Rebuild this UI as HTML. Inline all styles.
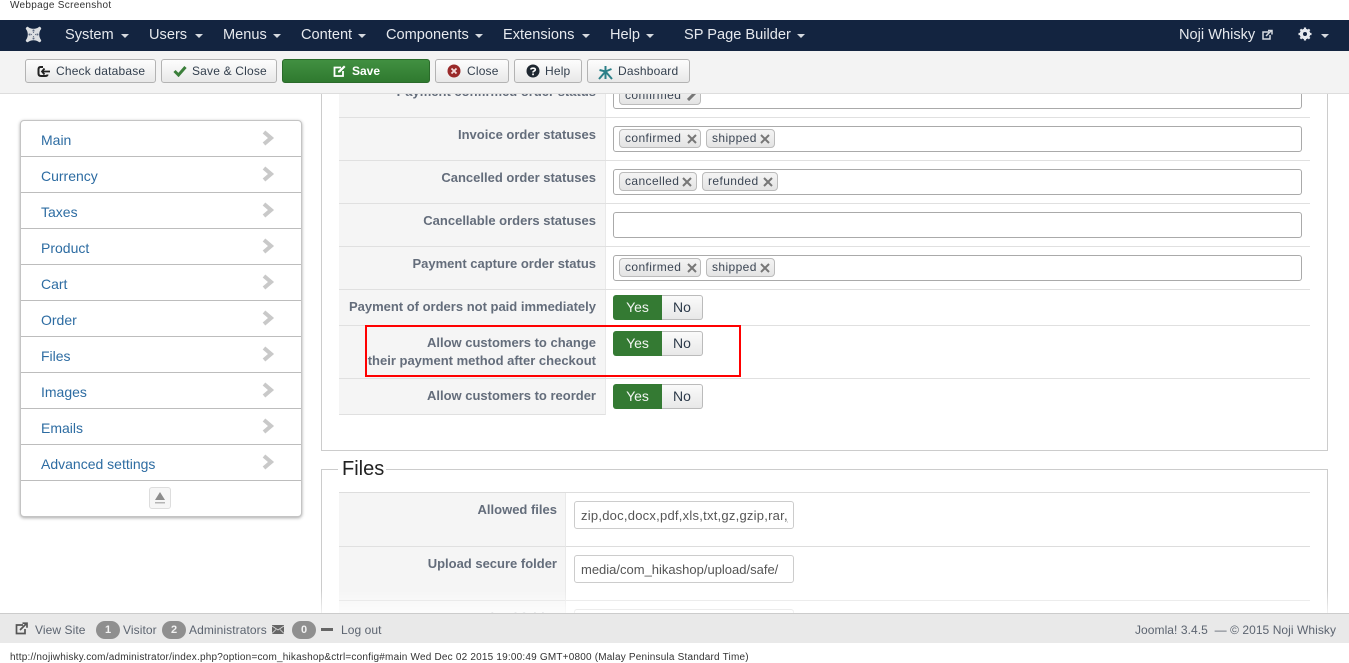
<!DOCTYPE html>
<html><head><meta charset="utf-8"><title>Webpage Screenshot</title>
<style>
*{box-sizing:border-box}
html,body{margin:0;padding:0;background:#fff;width:1349px;height:663px;overflow:hidden;font-family:"Liberation Sans",Arial,sans-serif}
.a{position:absolute}
.t{position:absolute;white-space:nowrap}
.nav{color:#e6e9ee;font-size:14.6px;top:26px;line-height:18px}
.car{position:absolute;top:34px;width:8px;height:4px;border-left:4px solid transparent;border-right:4px solid transparent;border-top:4px solid #d5d9df}
.btn{position:absolute;top:59px;height:24px;border:1px solid #b3b3b3;border-radius:3px;background:linear-gradient(#fdfdfd,#e8e8e8);color:#333f4d;font-size:12px;letter-spacing:.18px;line-height:22px;white-space:nowrap}
.btn span{position:absolute;top:0}
.btn svg{position:absolute}
.side{left:20px;top:120px;width:282px;height:397px;background:#fff;border:1px solid #c4c4c4;border-radius:4px;box-shadow:0 1px 3px rgba(0,0,0,.35)}
.si{position:absolute;left:0;width:280px;height:36px;border-bottom:1px solid #bdbdbd;color:#2d6ca2;font-size:14px;line-height:38px;padding-left:20px}
.si svg{position:absolute;left:241px;top:9px}
.lab{position:absolute;left:339px;width:267px;background:#f5f5f5;border-right:1px solid #e9e9e9;border-bottom:1px solid #e0e0e0}
.rowl{position:absolute;left:605px;width:705px;height:1px;background:#e0e0e0}
.l{position:absolute;right:9px;top:8px;font-size:13px;font-weight:bold;color:#646d7b;white-space:nowrap;text-align:right;line-height:18px}
.box{position:absolute;left:613px;width:689px;height:26px;background:#fff;border:1px solid #aaa;border-radius:3px}
.tag{position:absolute;height:19px;border:1px solid #bbb;border-radius:4px;background:linear-gradient(#f4f4f4,#e4e4e4);font-size:12px;letter-spacing:.4px;color:#3c4654;line-height:16px;padding-left:5px;white-space:nowrap}
.tag b{position:absolute;top:4px;width:10px;height:10px}
.tag svg{display:block}
.yes{position:absolute;left:613px;width:49px;height:25px;background:#347a33;border-radius:3px 0 0 3px;color:#f2f5f2;font-size:14px;line-height:24px;text-align:center}
.no{position:absolute;left:662px;width:41px;height:25px;border:1px solid #bbb;border-left:none;border-radius:0 3px 3px 0;background:linear-gradient(#fafafa,#e8e8e8);color:#2d3a4a;font-size:14px;line-height:23px;text-align:center}
.inp{position:absolute;left:574px;width:220px;height:28px;background:#fff;border:1px solid #ccc;border-radius:3px;font-size:13px;color:#555;line-height:27px;padding-left:6px;white-space:nowrap}
.inp div{width:207px;overflow:hidden}
.foot{color:#5c6470;font-size:12px;letter-spacing:.08px;top:623px;line-height:14px}
.badge{position:absolute;top:621px;width:24px;height:18px;border-radius:9px;background:#8f8f8f;color:#f2f2f2;font-size:11px;font-weight:bold;text-align:center;line-height:18px}
</style></head><body>
<div class="t" style="left:10px;top:0;font-size:10px;letter-spacing:.3px;color:#333;line-height:11px">Webpage Screenshot</div>

<div class="a" style="left:0;top:20px;width:1349px;height:31px;background:#132440"></div>
<svg class="a" style="left:24px;top:25px" width="19" height="19" viewBox="0 0 19 19"><g fill="none" stroke="#dcdfe2" stroke-linecap="round"><path stroke-width="3.200" d="M3.500 3.500C7 6 12 6 15.500 3.500M3.500 15.500C7 13 12 13 15.500 15.500M3.500 3.500C6 7 6 12 3.500 15.500M15.500 3.500C13 7 13 12 15.500 15.500"/><path stroke-width="2.400" d="M4 4l11 11M15 4L4 15"/></g><circle cx="9.500" cy="5.500" r="1" fill="#5c6a80"/><circle cx="9.500" cy="13.500" r="1" fill="#5c6a80"/><circle cx="5.500" cy="9.500" r="1" fill="#5c6a80"/><circle cx="13.500" cy="9.500" r="1" fill="#5c6a80"/></svg>
<div class="t nav" style="left:65px">System</div><div class="car" style="left:121px"></div>
<div class="t nav" style="left:149px">Users</div><div class="car" style="left:195px"></div>
<div class="t nav" style="left:223px">Menus</div><div class="car" style="left:273px"></div>
<div class="t nav" style="left:301px">Content</div><div class="car" style="left:358px"></div>
<div class="t nav" style="left:386px">Components</div><div class="car" style="left:475px"></div>
<div class="t nav" style="left:503px">Extensions</div><div class="car" style="left:582px"></div>
<div class="t nav" style="left:610px">Help</div><div class="car" style="left:646px"></div>
<div class="t nav" style="left:684px">SP Page Builder</div><div class="car" style="left:797px"></div>
<div class="t nav" style="left:1179px">Noji Whisky</div>
<svg class="a" style="left:1261px;top:29px" width="12" height="12" viewBox="0 0 12 12"><path d="M8 3H2v7h7V6" fill="none" stroke="#d5d9df" stroke-width="1.500"/><path d="M5 7l5-5M7 1.500h4v4" fill="none" stroke="#d5d9df" stroke-width="1.500"/></svg>
<svg class="a" style="left:1298px;top:27px" width="14" height="14" viewBox="0 0 14 14"><circle cx="7" cy="7" r="3.800" fill="none" stroke="#e6e9ee" stroke-width="3"/><path d="M7 .5v13M.5 7h13M2.400 2.400l9.200 9.200M11.600 2.400l-9.200 9.200" stroke="#e6e9ee" stroke-width="2.200"/><circle cx="7" cy="7" r="2" fill="#132440"/></svg>
<div class="car" style="left:1321px"></div>

<div class="a" style="left:0;top:51px;width:1349px;height:43px;background:#f3f3f3;border-bottom:1px solid #ddd;z-index:5"></div>
<div style="position:absolute;left:0;top:0;z-index:6">
<div class="btn" style="left:25px;width:131px"><svg style="left:11px;top:5px" width="14" height="13" viewBox="0 0 14 13"><path d="M6 2H3.500C2 2 1.500 3 1.500 4.500v4C1.500 10.500 2.500 11 4 11h4C9.500 11 10.500 10.500 10.500 9.500" fill="none" stroke="#222" stroke-width="2"/><path d="M6 6.500h7M7.500 3.500L5 6.500l2.500 3" fill="none" stroke="#222" stroke-width="1.800"/></svg><span style="left:30px">Check database</span></div>
<div class="btn" style="left:161px;width:116px"><svg style="left:11px;top:5px" width="14" height="12" viewBox="0 0 14 12"><path d="M1.500 6l4 4L12.500 2" fill="none" stroke="#3b7f3a" stroke-width="3"/></svg><span style="left:30px">Save &amp; Close</span></div>
<div class="btn" style="left:282px;width:148px;background:linear-gradient(#419041,#2f7a2f);border-color:#2a6a2a;color:#fff;font-weight:bold;letter-spacing:0"><svg style="left:50px;top:5px" width="13" height="12" viewBox="0 0 13 12"><path d="M8 2.500H1.500v8.500h8.500V6" fill="none" stroke="#fff" stroke-width="1.800"/><path d="M5 7.500V6l6-5.500 1.500 1.500L7 7.500z" fill="#fff"/></svg><span style="left:69px">Save</span></div>
<div class="btn" style="left:435px;width:74px"><svg style="left:11px;top:4px" width="14" height="14" viewBox="0 0 14 14"><circle cx="7" cy="7" r="6.500" fill="#9a2a2a"/><path d="M4.500 4.500l5 5M9.500 4.500l-5 5" stroke="#f4dddd" stroke-width="1.800"/></svg><span style="left:31px">Close</span></div>
<div class="btn" style="left:514px;width:68px"><svg style="left:11px;top:4px" width="14" height="14" viewBox="0 0 14 14"><circle cx="7" cy="7" r="6.500" fill="#1e2730"/><path d="M4.800 5.500C5 3.800 9.300 3.600 9.300 5.700 9.300 7 7 7 7 8.500" fill="none" stroke="#fff" stroke-width="1.600"/><rect x="6.200" y="9.500" width="1.700" height="1.700" fill="#fff"/></svg><span style="left:30px">Help</span></div>
<div class="btn" style="left:587px;width:103px"><svg style="left:10px;top:5px" width="15" height="15" viewBox="0 0 15 15"><path d="M7.500 1v13M1 14l6.500-7.500L14 14M1.500 5l6 1.500 6-2.500" fill="none" stroke="#2c8088" stroke-width="2"/></svg><span style="left:30px">Dashboard</span></div>
</div>

<div class="a side">
<div class="si" style="top:0">Main<svg width="13" height="16" viewBox="0 0 13 16"><path d="M2 2l7 6-7 6" fill="none" stroke="#c9c9c9" stroke-width="4"/></svg></div>
<div class="si" style="top:36px">Currency<svg width="13" height="16" viewBox="0 0 13 16"><path d="M2 2l7 6-7 6" fill="none" stroke="#c9c9c9" stroke-width="4"/></svg></div>
<div class="si" style="top:72px">Taxes<svg width="13" height="16" viewBox="0 0 13 16"><path d="M2 2l7 6-7 6" fill="none" stroke="#c9c9c9" stroke-width="4"/></svg></div>
<div class="si" style="top:108px">Product<svg width="13" height="16" viewBox="0 0 13 16"><path d="M2 2l7 6-7 6" fill="none" stroke="#c9c9c9" stroke-width="4"/></svg></div>
<div class="si" style="top:144px">Cart<svg width="13" height="16" viewBox="0 0 13 16"><path d="M2 2l7 6-7 6" fill="none" stroke="#c9c9c9" stroke-width="4"/></svg></div>
<div class="si" style="top:180px">Order<svg width="13" height="16" viewBox="0 0 13 16"><path d="M2 2l7 6-7 6" fill="none" stroke="#c9c9c9" stroke-width="4"/></svg></div>
<div class="si" style="top:216px">Files<svg width="13" height="16" viewBox="0 0 13 16"><path d="M2 2l7 6-7 6" fill="none" stroke="#c9c9c9" stroke-width="4"/></svg></div>
<div class="si" style="top:252px">Images<svg width="13" height="16" viewBox="0 0 13 16"><path d="M2 2l7 6-7 6" fill="none" stroke="#c9c9c9" stroke-width="4"/></svg></div>
<div class="si" style="top:288px">Emails<svg width="13" height="16" viewBox="0 0 13 16"><path d="M2 2l7 6-7 6" fill="none" stroke="#c9c9c9" stroke-width="4"/></svg></div>
<div class="si" style="top:324px">Advanced settings<svg width="13" height="16" viewBox="0 0 13 16"><path d="M2 2l7 6-7 6" fill="none" stroke="#c9c9c9" stroke-width="4"/></svg></div>
<div class="a" style="left:128px;top:366px;width:22px;height:22px;border:1px solid #ddd;border-radius:3px;background:#f6f6f6"><svg style="display:block;margin:3px 0 0 4px" width="12" height="14" viewBox="0 0 12 14"><path d="M6 1l5 8H1z" fill="#8d8d8d"/><rect x="1" y="11" width="10" height="1.500" fill="#b5b5b5"/></svg></div>
</div>

<!-- main panel -->
<div class="a" style="left:321px;top:90px;width:1007px;height:361px;border:1px solid #ccc;border-top:none"></div>

<div class="lab" style="top:75px;height:43px"><div class="l">Payment confirmed order status</div></div><div class="rowl" style="top:117px"></div>
<div class="lab" style="top:118px;height:43px"><div class="l">Invoice order statuses</div></div><div class="rowl" style="top:160px"></div>
<div class="lab" style="top:161px;height:43px"><div class="l">Cancelled order statuses</div></div><div class="rowl" style="top:203px"></div>
<div class="lab" style="top:204px;height:43px"><div class="l">Cancellable orders statuses</div></div><div class="rowl" style="top:246px"></div>
<div class="lab" style="top:247px;height:43px"><div class="l">Payment capture order status</div></div><div class="rowl" style="top:289px"></div>
<div class="lab" style="top:290px;height:36px"><div class="l">Payment of orders not paid immediately</div></div><div class="rowl" style="top:325px"></div>
<div class="lab" style="top:326px;height:53px"><div class="l">Allow customers to change<br>their payment method after checkout</div></div><div class="rowl" style="top:378px"></div>
<div class="lab" style="top:379px;height:36px"><div class="l">Allow customers to reorder</div></div>

<!-- first partial box, clipped by the toolbar -->
<div class="box" style="top:83px"></div>
<div class="tag" style="left:619px;top:86px;width:82px">confirmed<b style="left:67px"><svg width="10" height="10" viewBox="0 0 10 10"><path d="M1 9l7-7" stroke="#777" stroke-width="3"/></svg></b></div>

<div class="box" style="top:126px"></div>
<div class="tag" style="left:619px;top:129px;width:82px">confirmed<b style="left:67px"><svg width="10" height="10" viewBox="0 0 10 10"><path d="M1 1l8 8M9 1l-8 8" stroke="#777" stroke-width="2"/></svg></b></div>
<div class="tag" style="left:706px;top:129px;width:69px">shipped<b style="left:53px"><svg width="10" height="10" viewBox="0 0 10 10"><path d="M1 1l8 8M9 1l-8 8" stroke="#777" stroke-width="2"/></svg></b></div>

<div class="box" style="top:169px"></div>
<div class="tag" style="left:619px;top:172px;width:78px">cancelled<b style="left:62px"><svg width="10" height="10" viewBox="0 0 10 10"><path d="M1 1l8 8M9 1l-8 8" stroke="#777" stroke-width="2"/></svg></b></div>
<div class="tag" style="left:702px;top:172px;width:76px">refunded<b style="left:60px"><svg width="10" height="10" viewBox="0 0 10 10"><path d="M1 1l8 8M9 1l-8 8" stroke="#777" stroke-width="2"/></svg></b></div>

<div class="box" style="top:212px"></div>

<div class="box" style="top:255px"></div>
<div class="tag" style="left:619px;top:258px;width:82px">confirmed<b style="left:67px"><svg width="10" height="10" viewBox="0 0 10 10"><path d="M1 1l8 8M9 1l-8 8" stroke="#777" stroke-width="2"/></svg></b></div>
<div class="tag" style="left:706px;top:258px;width:69px">shipped<b style="left:53px"><svg width="10" height="10" viewBox="0 0 10 10"><path d="M1 1l8 8M9 1l-8 8" stroke="#777" stroke-width="2"/></svg></b></div>

<div class="yes" style="top:295px">Yes</div><div class="no" style="top:295px">No</div>
<div class="yes" style="top:331px">Yes</div><div class="no" style="top:331px">No</div>
<div class="yes" style="top:384px">Yes</div><div class="no" style="top:384px">No</div>

<div class="a" style="left:365px;top:325px;width:376px;height:52px;border:2px solid #f00"></div>

<!-- Files fieldset -->
<div class="a" style="left:321px;top:469px;width:1007px;height:150px;border:1px solid #ccc;border-bottom:none"></div>
<div class="t" style="left:338px;top:457px;padding:0 2px 0 4px;background:#fff;font-size:20px;line-height:24px;color:#222">Files</div>
<div class="a" style="left:339px;top:492px;width:971px;height:1px;background:#ddd"></div>
<div class="lab" style="top:493px;width:227px;height:54px"><div class="l" style="right:8px">Allowed files</div></div>
<div class="lab" style="top:547px;width:227px;height:54px"><div class="l" style="right:8px">Upload secure folder</div></div>
<div class="lab" style="top:601px;width:227px;height:20px;border-bottom:none"><div class="l" style="right:8px">Upload folder</div></div>
<div class="a" style="left:566px;top:546px;width:744px;height:1px;background:#ddd"></div>
<div class="a" style="left:566px;top:600px;width:744px;height:1px;background:#e3e3e3"></div>
<div class="inp" style="top:501px"><div style="letter-spacing:.24px">zip,doc,docx,pdf,xls,txt,gz,gzip,rar,jpg</div></div>
<div class="inp" style="top:555px"><div>media/com_hikashop/upload/safe/</div></div>
<div class="inp" style="top:609px"></div>
<div class="a" style="left:320px;top:590px;width:1010px;height:23px;background:linear-gradient(rgba(255,255,255,0),rgba(255,255,255,.75))"></div>

<!-- footer -->
<div class="a" style="left:0;top:613px;width:1349px;height:30px;background:#e9e9e9;border-top:1px solid #ccc"></div>
<svg class="a" style="left:15px;top:622px" width="13" height="13" viewBox="0 0 13 13"><path d="M8 3H1.500v8.500H10V7" fill="none" stroke="#555" stroke-width="1.700"/><path d="M5 8l6-6M7.500 1.200h4.500v4.500" fill="none" stroke="#555" stroke-width="1.700"/></svg>
<div class="t foot" style="left:35px">View Site</div>
<div class="badge" style="left:96px">1</div><div class="t foot" style="left:123px">Visitor</div>
<div class="badge" style="left:162px">2</div><div class="t foot" style="left:189px">Administrators</div>
<svg class="a" style="left:272px;top:625px" width="12" height="9" viewBox="0 0 12 9"><rect width="12" height="9" fill="#666"/><path d="M0 1l6 4 6-4M0 8.500l4-4M12 8.500l-4-4" fill="none" stroke="#ddd" stroke-width=".8"/></svg>
<div class="badge" style="left:292px">0</div>
<div class="a" style="left:321px;top:628px;width:12px;height:3px;background:#666"></div>
<div class="t foot" style="left:341px">Log out</div>
<div class="t foot" style="left:1135px;letter-spacing:.06px">Joomla! 3.4.5 &nbsp;— © 2015 Noji Whisky</div>

<div class="t" style="left:10px;top:652px;font-size:10px;letter-spacing:.2px;color:#333;line-height:11px">http://nojiwhisky.com/administrator/index.php?option=com_hikashop&amp;ctrl=config#main Wed Dec 02 2015 19:00:49 GMT+0800 (Malay Peninsula Standard Time)</div>
</body></html>
